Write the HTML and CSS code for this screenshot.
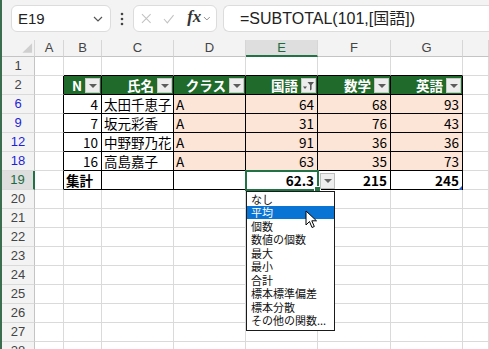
FILE: index.html
```html
<!DOCTYPE html>
<html lang="ja">
<head>
    <meta charset="UTF-8">
    <title>SUBTOTAL</title>
    <link rel="stylesheet" href="styles.css">
</head>
<body>
    <div class="app">
        <!-- Formula bar -->
        <div class="toolbar">
            <div class="namebox">
                <span>E19</span>
                <svg width="10" height="6" viewBox="0 0 10 6"><polyline points="1,1 5,5 9,1" fill="none" stroke="#555" stroke-width="1.2"/></svg>
            </div>
            <svg class="vdots" width="4" height="14" viewBox="0 0 4 14"><circle cx="2" cy="2" r="1.3" fill="#444"/><circle cx="2" cy="7" r="1.3" fill="#444"/><circle cx="2" cy="12" r="1.3" fill="#444"/></svg>
            <div class="fxbox">
                <svg width="11" height="11" viewBox="0 0 11 11"><path d="M1 1 L10 10 M10 1 L1 10" stroke="#c2c2c2" stroke-width="1.1"/></svg>
                <svg width="12" height="10" viewBox="0 0 12 10"><polyline points="1,5 4.5,9 11,1" fill="none" stroke="#c2c2c2" stroke-width="1.1"/></svg>
                <span class="fx">fx</span>
                <svg width="8" height="5" viewBox="0 0 8 5"><polyline points="1,1 4,4 7,1" fill="none" stroke="#888" stroke-width="1"/></svg>
            </div>
            <div class="formula">=SUBTOTAL(101,[国語])</div>
        </div>

        <!-- Sheet -->
        <div class="sheet">
            <div class="row ch">
                <div class="c corner"><svg width="33" height="17" viewBox="0 0 33 17"><polygon points="21,13 31,3 31,13" fill="#cfcfcf"/></svg></div>
                <div class="c colh">A</div>
                <div class="c colh">B</div>
                <div class="c colh">C</div>
                <div class="c colh">D</div>
                <div class="c colh on">E</div>
                <div class="c colh">F</div>
                <div class="c colh">G</div>
                <div class="c colh"></div>
            </div>
            <div class="row">
                <div class="c rh">1</div>
                <div class="c"></div>
                <div class="c bb"></div>
                <div class="c bb"></div>
                <div class="c bb"></div>
                <div class="c bb"></div>
                <div class="c bb"></div>
                <div class="c bb"></div>
                <div class="c"></div>
            </div>
            <div class="row">
                <div class="c rh">2</div>
                <div class="c lb"></div>
                <div class="c tb hd"><span>N</span><i class="fb"></i></div>
                <div class="c tb hd"><span>氏名</span><i class="fb"></i></div>
                <div class="c tb hd"><span>クラス</span><i class="fb"></i></div>
                <div class="c tb hd"><span>国語</span><i class="fb on"><svg width="13" height="13" viewBox="0 0 13 13"><polygon points="1,7.5 5,7.5 3,10" fill="#555"/><polygon points="5.5,3 12,3 9.6,6 9.6,10.5 8,11.5 8,6" fill="#555"/></svg></i></div>
                <div class="c tb hd"><span>数学</span><i class="fb"></i></div>
                <div class="c tb hd"><span>英語</span><i class="fb"></i></div>
                <div class="c"></div>
            </div>
            <div class="row">
                <div class="c rh blue">6</div>
                <div class="c lb"></div>
                <div class="c tb r">4</div>
                <div class="c tb l">太田千恵子</div>
                <div class="c tb pe l">A</div>
                <div class="c tb pe r">64</div>
                <div class="c tb pe r">68</div>
                <div class="c tb pe r">93</div>
                <div class="c"></div>
            </div>
            <div class="row">
                <div class="c rh blue">9</div>
                <div class="c lb"></div>
                <div class="c tb r">7</div>
                <div class="c tb l">坂元彩香</div>
                <div class="c tb pe l">A</div>
                <div class="c tb pe r">31</div>
                <div class="c tb pe r">76</div>
                <div class="c tb pe r">43</div>
                <div class="c"></div>
            </div>
            <div class="row">
                <div class="c rh blue">12</div>
                <div class="c lb"></div>
                <div class="c tb r">10</div>
                <div class="c tb l">中野野乃花</div>
                <div class="c tb pe l">A</div>
                <div class="c tb pe r">91</div>
                <div class="c tb pe r">36</div>
                <div class="c tb pe r">36</div>
                <div class="c"></div>
            </div>
            <div class="row">
                <div class="c rh blue">18</div>
                <div class="c lb"></div>
                <div class="c tb r">16</div>
                <div class="c tb l">高島嘉子</div>
                <div class="c tb pe l">A</div>
                <div class="c tb pe r">63</div>
                <div class="c tb pe r">35</div>
                <div class="c tb pe r">73</div>
                <div class="c"></div>
            </div>
            <div class="row">
                <div class="c rh on">19</div>
                <div class="c lb"></div>
                <div class="c tb l b">集計</div>
                <div class="c tb"></div>
                <div class="c tb"></div>
                <div class="c tb r b">62.3</div>
                <div class="c tb r b">215</div>
                <div class="c tb r b">245</div>
                <div class="c"></div>
            </div>
            <div class="row"><div class="c rh">20</div><div class="c"></div><div class="c"></div><div class="c"></div><div class="c"></div><div class="c"></div><div class="c"></div><div class="c"></div><div class="c"></div></div>
            <div class="row"><div class="c rh">21</div><div class="c"></div><div class="c"></div><div class="c"></div><div class="c"></div><div class="c"></div><div class="c"></div><div class="c"></div><div class="c"></div></div>
            <div class="row"><div class="c rh">22</div><div class="c"></div><div class="c"></div><div class="c"></div><div class="c"></div><div class="c"></div><div class="c"></div><div class="c"></div><div class="c"></div></div>
            <div class="row"><div class="c rh">23</div><div class="c"></div><div class="c"></div><div class="c"></div><div class="c"></div><div class="c"></div><div class="c"></div><div class="c"></div><div class="c"></div></div>
            <div class="row"><div class="c rh">24</div><div class="c"></div><div class="c"></div><div class="c"></div><div class="c"></div><div class="c"></div><div class="c"></div><div class="c"></div><div class="c"></div></div>
            <div class="row"><div class="c rh">25</div><div class="c"></div><div class="c"></div><div class="c"></div><div class="c"></div><div class="c"></div><div class="c"></div><div class="c"></div><div class="c"></div></div>
            <div class="row"><div class="c rh">26</div><div class="c"></div><div class="c"></div><div class="c"></div><div class="c"></div><div class="c"></div><div class="c"></div><div class="c"></div><div class="c"></div></div>
            <div class="row"><div class="c rh">27</div><div class="c"></div><div class="c"></div><div class="c"></div><div class="c"></div><div class="c"></div><div class="c"></div><div class="c"></div><div class="c"></div></div>
            <div class="row"><div class="c rh">28</div><div class="c"></div><div class="c"></div><div class="c"></div><div class="c"></div><div class="c"></div><div class="c"></div><div class="c"></div><div class="c"></div></div>
        </div>

        <!-- Overlays: selection, cell dropdown, menu, pointer -->
        <div class="sel"><i class="handle"></i></div>
        <div class="ddbtn"></div>
        <i class="resize"></i>
        <ul class="menu">
            <li>なし</li>
            <li class="hover">平均</li>
            <li>個数</li>
            <li>数値の個数</li>
            <li>最大</li>
            <li>最小</li>
            <li>合計</li>
            <li>標本標準偏差</li>
            <li>標本分散</li>
            <li>その他の関数...</li>
        </ul>
        <svg class="pointer" width="13" height="19" viewBox="0 0 13 19"><path d="M1 1 L1 15 L4.5 11.5 L7 17.5 L9.3 16.5 L6.8 10.8 L11.5 10.8 Z" fill="#fff" stroke="#000" stroke-width="1" stroke-linejoin="round"/></svg>
    </div>
</body>
</html>
```

FILE: styles.css
```css
body {
    margin: 0;
    font-family: "Liberation Sans", "Noto Sans CJK JP", sans-serif;
    background-color: #ffffff;
}

.app {
    position: relative;
    width: 487px;
    height: 349px;
    overflow: hidden;
    border-left: 2px solid #3a6e4e;
}

/* formula bar */
.toolbar {
    height: 40px;
    box-sizing: border-box;
    padding: 5px 0 0 9px;
    background-color: #f3f3f3;
    display: flex;
    align-items: flex-start;
}

.namebox {
    width: 100px;
    height: 27px;
    box-sizing: border-box;
    background-color: #ffffff;
    border: 1px solid #dcdcdc;
    border-radius: 6px;
    padding: 0 7px 0 6px;
    display: flex;
    align-items: center;
    justify-content: space-between;
    font-size: 15px;
    color: #222;
}

.vdots {
    margin: 7px 9px 0 9px;
}

.fxbox {
    width: 84px;
    height: 27px;
    box-sizing: border-box;
    background-color: #ffffff;
    border: 1px solid #dcdcdc;
    border-radius: 6px;
    padding: 0 5px 0 7px;
    display: flex;
    align-items: center;
}

.fxbox svg:nth-child(2) {
    margin-left: 11px;
}

.fx {
    font-family: "Liberation Serif", serif;
    font-style: italic;
    font-weight: bold;
    font-size: 17px;
    color: #333;
    margin: -3px 2px 0 13px;
}

.formula {
    flex: 1;
    height: 27px;
    box-sizing: border-box;
    margin-left: 6px;
    background-color: #ffffff;
    border: 1px solid #dcdcdc;
    border-right: none;
    border-radius: 6px 0 0 6px;
    padding-left: 16px;
    font-size: 16px;
    line-height: 25px;
    color: #222;
    white-space: nowrap;
}

/* grid */
.row {
    display: grid;
    grid-template-columns: 33px 29px 38px 72px 72px 72px 73px 72px 1fr;
    height: 19px;
}

.row.ch {
    height: 17px;
}

.c {
    box-sizing: border-box;
    border-right: 1px solid #dadada;
    border-bottom: 1px solid #dadada;
    font-family: "Noto Sans CJK JP", sans-serif;
    font-size: 13.5px;
    line-height: 18px;
    color: #000;
    white-space: nowrap;
    overflow: hidden;
    display: flex;
    align-items: center;
}

.corner,
.colh {
    background-color: #f3f3f3;
    border-right-color: #d6d6d6;
    border-bottom-color: #c4c4c4;
}

.colh {
    justify-content: center;
    font-family: "Liberation Sans", sans-serif;
    font-size: 13px;
    color: #444;
}

.colh.on {
    background-color: #dedede;
    border-bottom: 2px solid #217346;
    color: #1c6b40;
}

.rh {
    justify-content: center;
    background-color: #f3f3f3;
    border-right-color: #c4c4c4;
    border-bottom-color: #dadada;
    font-family: "Liberation Sans", sans-serif;
    font-size: 13px;
    color: #444;
}

.rh.blue {
    color: #1f1fd8;
}

.rh.on {
    background-color: #dedede;
    border-right: 2px solid #217346;
    color: #1c6b40;
}

/* table */
.bb {
    border-bottom-color: #000;
}

.lb {
    border-right-color: #000;
}

.tb {
    border-right-color: #000;
    border-bottom-color: #000;
}

.hd {
    background-color: #206a2c;
    color: #ffffff;
    font-weight: bold;
    justify-content: flex-end;
    padding-right: 1px;
}

.hd span {
    margin-right: 3px;
}

.fb {
    width: 15px;
    height: 15px;
    box-sizing: border-box;
    background-color: #ededed;
    border: 1px solid #c9c9c9;
    display: flex;
    align-items: center;
    justify-content: center;
}

.fb::after {
    content: "";
    border-left: 4px solid transparent;
    border-right: 4px solid transparent;
    border-top: 4px solid #5c5c5c;
    margin-top: 1px;
}

.fb.on::after {
    display: none;
}

.pe {
    background-color: #fce4d6;
}

.r {
    justify-content: flex-end;
    padding-right: 3px;
}

.l {
    padding-left: 2px;
}

.b {
    font-weight: bold;
}

/* overlays */
.sel {
    position: absolute;
    left: 243px;
    top: 170px;
    width: 74px;
    height: 21px;
    box-sizing: border-box;
    border: 2px solid #217346;
}

.handle {
    position: absolute;
    right: -4px;
    bottom: -4px;
    width: 5px;
    height: 5px;
    background-color: #217346;
    border: 1px solid #ffffff;
}

.ddbtn {
    position: absolute;
    left: 318px;
    top: 173px;
    width: 15px;
    height: 16px;
    box-sizing: border-box;
    background-color: #eeeeee;
    border: 1px solid #bdbdbd;
    display: flex;
    align-items: center;
    justify-content: center;
}

.ddbtn::after {
    content: "";
    border-left: 4px solid transparent;
    border-right: 4px solid transparent;
    border-top: 4px solid #666;
}

.resize {
    position: absolute;
    left: 456px;
    top: 186px;
    width: 0;
    height: 0;
    border-left: 4px solid transparent;
    border-bottom: 4px solid #2b5fc5;
}

.menu {
    position: absolute;
    left: 244px;
    top: 191px;
    width: 89px;
    height: 140px;
    box-sizing: border-box;
    margin: 0;
    padding: 0;
    list-style: none;
    background-color: #ffffff;
    border: 1px solid #1a1a1a;
}

.menu li {
    height: 13.5px;
    padding-left: 4px;
    display: flex;
    align-items: center;
    overflow: hidden;
    font-family: "Noto Sans CJK JP", sans-serif;
    font-size: 11px;
    line-height: 12px;
    color: #111;
    white-space: nowrap;
}

.menu li.hover {
    background-color: #0a74d4;
    color: #ffffff;
}

.pointer {
    position: absolute;
    left: 303px;
    top: 210px;
}
```
